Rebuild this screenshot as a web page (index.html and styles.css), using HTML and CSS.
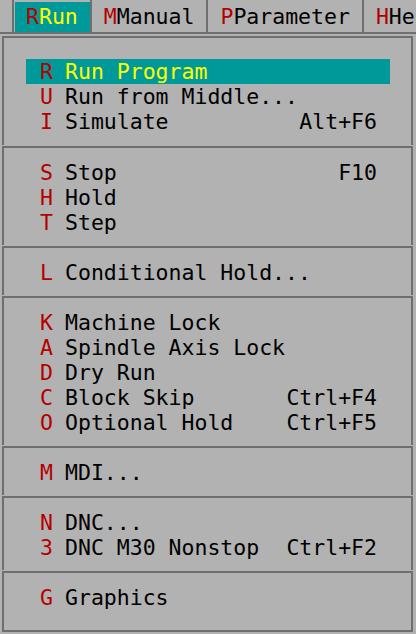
FILE: index.html
```html
<!DOCTYPE html>
<html lang="en">
<head>
    <meta charset="UTF-8">
    <meta name="viewport" content="width=device-width, initial-scale=1.0">
    <title>Run Menu</title>
    <link rel="stylesheet" href="styles.css">
</head>
<body>
    <div class="menubar">
        <div class="lead"></div>
        <div class="tab active"><span class="tab-label"><span class="hot">R</span>Run</span></div>
        <div class="tab"><span class="tab-label"><span class="hot">M</span>Manual</span></div>
        <div class="tab"><span class="tab-label"><span class="hot">P</span>Parameter</span></div>
        <div class="tab"><span class="tab-label"><span class="hot">H</span>Help</span></div>
    </div>

    <div class="panel">
        <div class="group first">
            <div class="item selected"><span class="key">R</span><span class="label">Run Program</span></div>
            <div class="item"><span class="key">U</span><span class="label">Run from Middle...</span></div>
            <div class="item"><span class="key">I</span><span class="label">Simulate</span><span class="accel">Alt+F6</span></div>
        </div>
        <div class="group">
            <div class="item"><span class="key">S</span><span class="label">Stop</span><span class="accel">F10</span></div>
            <div class="item"><span class="key">H</span><span class="label">Hold</span></div>
            <div class="item"><span class="key">T</span><span class="label">Step</span></div>
        </div>
        <div class="group">
            <div class="item"><span class="key">L</span><span class="label">Conditional Hold...</span></div>
        </div>
        <div class="group">
            <div class="item"><span class="key">K</span><span class="label">Machine Lock</span></div>
            <div class="item"><span class="key">A</span><span class="label">Spindle Axis Lock</span></div>
            <div class="item"><span class="key">D</span><span class="label">Dry Run</span></div>
            <div class="item"><span class="key">C</span><span class="label">Block Skip</span><span class="accel">Ctrl+F4</span></div>
            <div class="item"><span class="key">O</span><span class="label">Optional Hold</span><span class="accel">Ctrl+F5</span></div>
        </div>
        <div class="group">
            <div class="item"><span class="key">M</span><span class="label">MDI...</span></div>
        </div>
        <div class="group">
            <div class="item"><span class="key">N</span><span class="label">DNC...</span></div>
            <div class="item"><span class="key">3</span><span class="label">DNC M30 Nonstop</span><span class="accel">Ctrl+F2</span></div>
        </div>
        <div class="group last">
            <div class="item"><span class="key">G</span><span class="label">Graphics</span></div>
        </div>
    </div>
</body>
</html>
```

FILE: styles.css
```css
body {
    margin: 0;
    width: 416px;
    height: 634px;
    overflow: hidden;
    background-color: #b2b2b2;
    color: #000;
    font-family: "DejaVu Sans Mono", monospace;
    font-size: 21.5px;
}
.menubar {
    display: flex;
    height: 32px;
    border-bottom: 2px solid #6f6f6f;
    white-space: nowrap;
    overflow: hidden;
}
.lead {
    flex: 0 0 12px;
}
.tab {
    flex: none;
    border-left: 2px solid #6f6f6f;
    padding: 2px 0 0 1px;
}
.tab-label {
    display: block;
    height: 30px;
    line-height: 30px;
    padding: 0 12px 0 11px;
}
.hot,
.key {
    color: #b40000;
}
.tab.active .tab-label,
.item.selected {
    background-color: #009999;
    color: #ffff00;
}
.panel {
    margin: 2px 3px 0 2px;
}
.group {
    border: 2px solid #6f6f6f;
    border-bottom: none;
    margin-top: 1px;
    padding: 12px 0 10px;
}
.group.first {
    margin-top: 0;
    padding: 21px 0 11px;
}
.group.last {
    border-bottom: 2px solid #6f6f6f;
    padding-bottom: 20px;
}
.item {
    display: flex;
    height: 25px;
    line-height: 25px;
    margin: 0 21px 0 22px;
    padding: 0 13px 0 14px;
    white-space: pre;
}
.key {
    flex: 0 0 25px;
}
.label {
    flex: 1;
}
```
